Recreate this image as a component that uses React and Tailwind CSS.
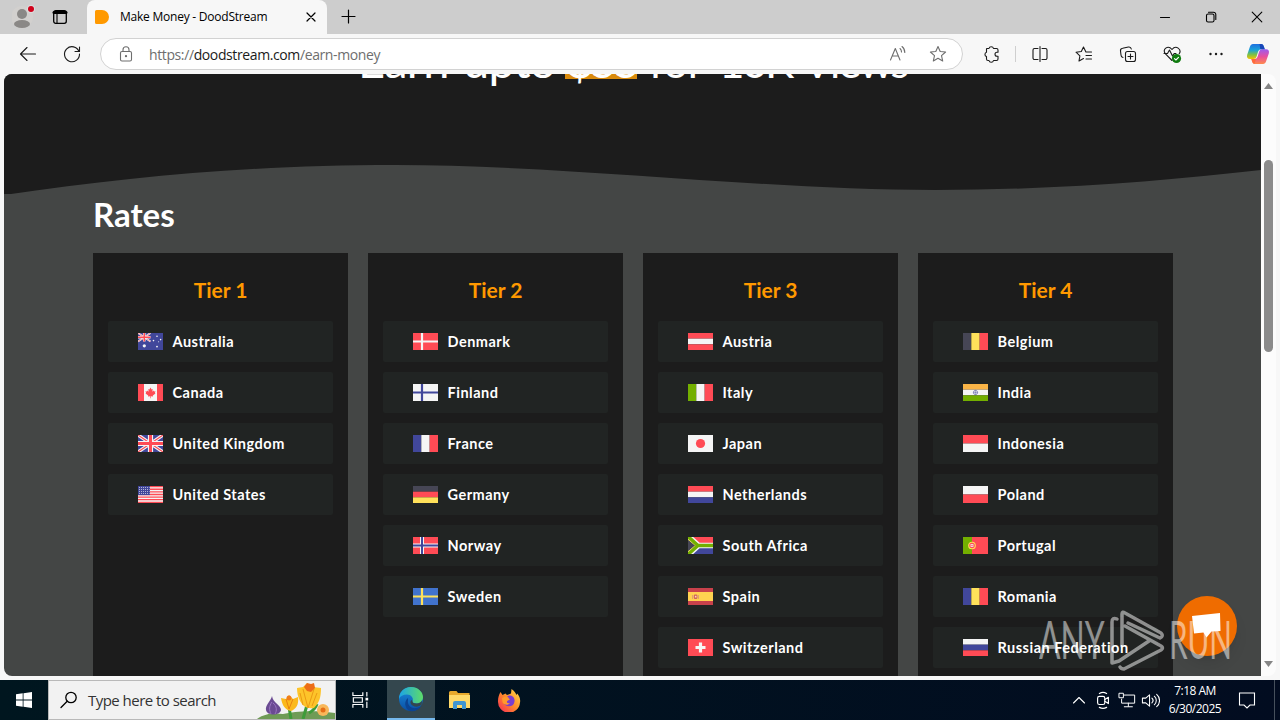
import { clsx } from "clsx";

const RED = "#ff4b55";
const BLUE = "#41479b";
const WHITE = "#f5f5f5";
const GREEN = "#73af00";
const YELLOW = "#ffe15a";
const BLACK = "#464655";

const HStripes = ({ colors }) =>
  colors.map((c, i) => (
    <rect key={i} y={(17 / colors.length) * i} width="25" height={17 / colors.length} fill={c} />
  ));

const VStripes = ({ colors }) =>
  colors.map((c, i) => (
    <rect key={i} x={(25 / colors.length) * i} width={25 / colors.length} height="17" fill={c} />
  ));

const Nordic = ({ bg, cross, inner }) => (
  <>
    <rect width="25" height="17" fill={bg} />
    <path d="M9 0v17M0 8.5h25" stroke={cross} strokeWidth={inner ? 4 : 2.2} />
    {inner && <path d="M9 0v17M0 8.5h25" stroke={inner} strokeWidth="2" />}
  </>
);

const UnionJack = () => (
  <>
    <rect width="25" height="17" fill={BLUE} />
    <path d="M0 0l25 17M25 0L0 17" stroke={WHITE} strokeWidth="3.4" />
    <path d="M0 0l25 17M25 0L0 17" stroke={RED} strokeWidth="1.1" />
    <path d="M12.5 0v17M0 8.5h25" stroke={WHITE} strokeWidth="5.2" />
    <path d="M12.5 0v17M0 8.5h25" stroke={RED} strokeWidth="3" />
  </>
);

const flags = {
  Australia: (
    <>
      <rect width="25" height="17" fill={BLUE} />
      <g transform="scale(.5)">
        <UnionJack />
      </g>
      <g fill={WHITE}>
        <circle cx="6.3" cy="12.8" r="1.6" />
        <circle cx="19" cy="3.2" r=".8" />
        <circle cx="15.5" cy="7.6" r=".8" />
        <circle cx="22.6" cy="6.6" r=".8" />
        <circle cx="19" cy="13.6" r=".9" />
        <circle cx="20.6" cy="8.8" r=".5" />
      </g>
    </>
  ),
  Canada: (
    <>
      <rect width="25" height="17" fill={WHITE} />
      <path d="M0 0h6v17H0zM19 0h6v17h-6z" fill={RED} />
      <path
        d="M12.5 3.6l1.1 2 1.1-.5-.4 2.6 1.3-1.1.4.9 1.5-.2-.6 1.6.6.6-2.7 2.1.2.9-2.2-.2v2h-.6v-2l-2.2.2.2-.9-2.7-2.1.6-.6-.6-1.6 1.5.2.4-.9 1.3 1.1-.4-2.6 1.1.5z"
        fill={RED}
      />
    </>
  ),
  "United Kingdom": <UnionJack />,
  "United States": (
    <>
      <rect width="25" height="17" fill={WHITE} />
      <path
        d="M0 .65h25M0 3.27h25M0 5.88h25M0 8.5h25M0 11.1h25M0 13.7h25M0 16.35h25"
        stroke={RED}
        strokeWidth="1.3"
      />
      <rect width="12" height="9.1" fill={BLUE} />
      <path
        d="M1 1.5h10.5M1 3.5h10.5M1 5.5h10.5M1 7.5h10.5"
        stroke={WHITE}
        strokeWidth=".8"
        strokeDasharray=".8 1.2"
      />
    </>
  ),
  Denmark: <Nordic bg={RED} cross={WHITE} />,
  Finland: <Nordic bg={WHITE} cross={BLUE} />,
  France: <VStripes colors={[BLUE, WHITE, RED]} />,
  Germany: <HStripes colors={[BLACK, RED, YELLOW]} />,
  Norway: <Nordic bg={RED} cross={WHITE} inner={BLUE} />,
  Sweden: <Nordic bg="#4173cd" cross={YELLOW} />,
  Austria: <HStripes colors={[RED, WHITE, RED]} />,
  Italy: <VStripes colors={[GREEN, WHITE, RED]} />,
  Japan: (
    <>
      <rect width="25" height="17" fill={WHITE} />
      <circle cx="12.5" cy="8.5" r="4.6" fill={RED} />
    </>
  ),
  Netherlands: <HStripes colors={[RED, WHITE, BLUE]} />,
  "South Africa": (
    <>
      <rect width="25" height="8.5" fill={RED} />
      <rect y="8.5" width="25" height="8.5" fill={BLUE} />
      <path d="M0-1l10.5 9.5H25M0 18l10.5-9.5" fill="none" stroke={WHITE} strokeWidth="5.6" />
      <path d="M-1 1.5l8.5 7-8.5 7z" fill={BLACK} stroke={YELLOW} strokeWidth="1" />
      <path d="M0-.5l10 9H25M0 17.5l10-9" fill="none" stroke={GREEN} strokeWidth="3.4" />
    </>
  ),
  Spain: (
    <>
      <rect width="25" height="17" fill="#c8414b" />
      <rect y="4" width="25" height="9" fill="#ffd250" />
      <path d="M4.5 7v4M10.5 7v4" stroke="#e0a070" strokeWidth="1" />
      <rect x="5.8" y="6.5" width="3.6" height="4.5" rx="1.2" fill="#d0605c" />
      <rect x="6.9" y="7.8" width="1.6" height="1.7" fill="#ffd9b0" />
    </>
  ),
  Switzerland: (
    <>
      <rect width="25" height="17" fill={RED} />
      <path d="M12.5 3.5v10M7.5 8.5h10" stroke={WHITE} strokeWidth="3.2" />
    </>
  ),
  Belgium: <VStripes colors={[BLACK, YELLOW, RED]} />,
  India: (
    <>
      <HStripes colors={["#fab446", WHITE, GREEN]} />
      <circle cx="12.5" cy="8.5" r="2.1" fill="none" stroke={BLUE} strokeWidth=".6" />
      <path d="M12.5 6.4v4.2M10.4 8.5h4.2" stroke={BLUE} strokeWidth=".4" />
    </>
  ),
  Indonesia: <HStripes colors={[RED, WHITE]} />,
  Poland: <HStripes colors={[WHITE, RED]} />,
  Portugal: (
    <>
      <rect width="25" height="17" fill={RED} />
      <rect width="9" height="17" fill={GREEN} />
      <circle cx="9" cy="8.5" r="3.3" fill={RED} stroke={YELLOW} strokeWidth="1.1" />
      <rect x="7.6" y="7" width="2.8" height="3" rx=".6" fill={WHITE} />
      <rect x="8.4" y="7.7" width="1.2" height="1.6" fill={RED} />
    </>
  ),
  Romania: <VStripes colors={[BLUE, YELLOW, RED]} />,
  "Russian Federation": <HStripes colors={[WHITE, BLUE, RED]} />,
};

const tiers = [
  { name: "Tier 1", countries: ["Australia", "Canada", "United Kingdom", "United States"] },
  { name: "Tier 2", countries: ["Denmark", "Finland", "France", "Germany", "Norway", "Sweden"] },
  {
    name: "Tier 3",
    countries: ["Austria", "Italy", "Japan", "Netherlands", "South Africa", "Spain", "Switzerland"],
  },
  {
    name: "Tier 4",
    countries: ["Belgium", "India", "Indonesia", "Poland", "Portugal", "Romania", "Russian Federation"],
  },
];

const Icon = ({ className, size = 20, children, ...props }) => (
  <svg
    width={size}
    height={size}
    viewBox="0 0 20 20"
    fill="none"
    stroke="currentColor"
    strokeWidth="1.1"
    strokeLinecap="round"
    strokeLinejoin="round"
    className={clsx("shrink-0", className)}
    {...props}
  >
    {children}
  </svg>
);

const TabStrip = () => (
  <div className="flex h-[34px] shrink-0 bg-[#cdcdcd] text-black">
    <div className="flex w-[87px] items-center rounded-br-lg pl-3">
      <svg width="24" height="26" viewBox="0 0 24 26" className="shrink-0">
        <circle cx="10" cy="13" r="11" fill="#d2d0ce" />
        <circle cx="10" cy="10" r="5" fill="#8a8886" />
        <ellipse cx="10" cy="20" rx="8" ry="4" fill="#8a8886" />
        <circle cx="19" cy="5" r="4" fill="#dcdcdc" />
        <circle cx="19" cy="5" r="3" fill="#d0021b" />
      </svg>
      <Icon className="ml-[14px]">
        <rect x="3.7" y="3.7" width="12.6" height="12.6" rx="2" strokeWidth="1.3" />
        <path d="M4 5.5h12" strokeWidth="3" />
        <path d="M7 7v9" />
      </Icon>
    </div>
    <div className="flex w-[240px] items-center rounded-t-lg bg-[#f7f7f7] pl-2">
      <svg width="14" height="14" viewBox="0 0 14 14">
        <path d="M0 1.5A1.5 1.5 0 0 1 1.5 0H7a7 7 0 0 1 0 14H1.5A1.5 1.5 0 0 1 0 12.5z" fill="#ff9900" />
      </svg>
      <span className="ml-[11px] w-[180px] whitespace-nowrap text-xs tracking-[-0.23px]">
        Make Money - DoodStream
      </span>
      <Icon size={20} className="ml-[1px]">
        <path d="M6 6l8 8M14 6l-8 8" strokeWidth="1.2" />
      </Icon>
    </div>
    <Icon className="mt-[6px] ml-[11px]">
      <path d="M10.500 4v13M4 10.500h13" strokeWidth="1.200" />
    </Icon>
    <div className="mr-[13px] ml-auto flex items-center gap-[26px]">
      <Icon>
        <path d="M5.5 10.5h9" />
      </Icon>
      <Icon>
        <rect x="5.5" y="7" width="7.5" height="8" rx="1.6" />
        <path d="M7.5 5.2h5a2.3 2.3 0 0 1 2.3 2.3v5" />
      </Icon>
      <Icon>
        <path d="M5.2 5.2l9.6 9.6M14.8 5.2l-9.6 9.6" />
      </Icon>
    </div>
  </div>
);

const CopilotLogo = () => (
  <svg width="24" height="22" viewBox="0 0 24 22" className="shrink-0">
    <defs>
      <linearGradient id="cpLeft" x1="0" y1="0" x2="0" y2="1">
        <stop offset="0" stopColor="#1f6fe0" />
        <stop offset=".4" stopColor="#19a3d8" />
        <stop offset=".7" stopColor="#7ac04a" />
        <stop offset="1" stopColor="#f5c400" />
      </linearGradient>
      <linearGradient id="cpRight" x1="0" y1="0" x2="0" y2="1">
        <stop offset="0" stopColor="#9b5cf0" />
        <stop offset=".5" stopColor="#e8509e" />
        <stop offset="1" stopColor="#ff8a4c" />
      </linearGradient>
    </defs>
    <path d="M7 1h8c1.8 0 2.4 1 3 3l.8 2.2h-3.5c-2 0-2.8 1-3.4 3l-1.3 4.3c-.5 1.7-1.5 2.5-3.2 2.5H4c-2.6 0-3.5-1.8-2.8-4.3L4 3.5C4.500 2 5.500 1 7 1z" fill="url(#cpLeft)" />
    <path d="M17 21H9c-1.800 0-2.400-1-3-3l-.6-2h3c2 0 2.800-1 3.400-3l1.300-4.300c.5-1.700 1.500-2.500 3.200-2.500H20c2.600 0 3.500 1.800 2.800 4.300L20 18.500c-.5 1.500-1.500 2.500-3 2.500z" fill="url(#cpRight)" />
    <path d="M13.500 1H15c1.800 0 2.400 1 3 3l.8 2.200h-4.500z" fill="#1847b8" />
    <path d="M5.400 16H10l-1.600 4.900C7 20.700 6.500 19.600 6 18z" fill="#ff6a3c" />
  </svg>
);

const Toolbar = () => (
  <div className="flex h-10 shrink-0 items-center bg-[#f7f7f7] text-[#1b1b1b]">
    <Icon className="ml-[18px]">
      <path d="M17.500 10H2.500M9 3.500L2.500 10 9 16.500" />
    </Icon>
    <Icon className="ml-6">
      <path d="M17 7.500A7.500 7.500 0 1 0 17.500 10M17.500 3v4.500H13" />
    </Icon>
    <div className="ml-[18px] flex h-8 w-[863px] items-center rounded-full border border-[#d2d2d2] bg-white text-[#6e6e6e]">
      <Icon className="ml-[15px]" size={20}>
        <rect x="4.500" y="7.500" width="11" height="9.500" rx="1.500" />
        <path d="M7 7.500V5.800a3 3 0 0 1 6 0v1.700" />
        <circle cx="10" cy="12.200" r=".6" fill="currentColor" />
      </Icon>
      <span className="ml-[13px] text-[14px] tracking-[-0.39px]">
        https://<span className="text-[#1b1b1b]">doodstream.com</span>/earn-money
      </span>
      <Icon className="ml-auto">
        <path d="M2.500 16L7.300 4.500 12 16M4.200 12h6.200M12 4.500c1 .8 1.500 2 1.500 3.500M14 2.500c2 1.500 2.800 3.500 2.800 6" />
      </Icon>
      <Icon className="mr-[14px] ml-5">
        <path d="M10 2.500l2.200 5 5.400.5-4.100 3.600 1.200 5.400-4.700-2.800L5.300 17l1.200-5.400L2.400 8l5.400-.5z" />
      </Icon>
    </div>
    <Icon className="ml-[19px]">
      <path d="M5 4.500h2a2.300 2.300 0 0 1 4.500 0h3a1.500 1.500 0 0 1 1.500 1.500v2.300h-1a2 2 0 0 0 0 4h1V15a1.500 1.500 0 0 1-1.500 1.500h-3a2.300 2.300 0 0 1-4.500 0H6A1.500 1.500 0 0 1 4.500 15v-2.500a2.200 2.200 0 0 1 0-4.200V5z" />
    </Icon>
    <div className="ml-[13px] h-4 w-px bg-[#cfcfcf]" />
    <div className="ml-[14px] flex items-center gap-6">
      <Icon>
        <path d="M10 2.500v15M8 4.500H4.500A1.500 1.500 0 0 0 3 6v8a1.500 1.500 0 0 0 1.500 1.500H8M12 4.500h3.500A1.500 1.500 0 0 1 17 6v8a1.500 1.500 0 0 1-1.500 1.500H12" />
      </Icon>
      <Icon>
        <path d="M17.500 8h-5.600L9.500 3 7.300 7.500 2 8.200l3.900 3.700L5 17l4.500-2.400M12 11.500h5.500M12 15h5.500" />
      </Icon>
      <Icon>
        <rect x="7.500" y="7.500" width="10" height="10" rx="2" />
        <path d="M12.500 10v5M10 12.500h5M5 13.500A2.500 2.500 0 0 1 3 11L2.500 7A2.500 2.500 0 0 1 4.600 4.200l5.800-1.200A2.500 2.500 0 0 1 13.300 5" />
      </Icon>
      <Icon>
        <path d="M10 16.500l-6.500-6.600C-.5 5.500 6 .5 10 5.500c4-5 10 0 7.200 4.300M2 9.500h3.500l2-3.500 3 6 1.700-2.500H14" />
        <circle cx="14.500" cy="14.500" r="4.600" fill="#107c10" stroke="none" />
        <path d="M12.500 14.600l1.400 1.400 2.600-2.700" stroke="white" />
      </Icon>
      <Icon>
        <g fill="currentColor" stroke="none">
          <circle cx="4.500" cy="10" r="1.200" />
          <circle cx="10" cy="10" r="1.200" />
          <circle cx="15.500" cy="10" r="1.200" />
        </g>
      </Icon>
    </div>
    <div className="ml-5">
      <CopilotLogo />
    </div>
  </div>
);

const CountryRow = ({ name }) => (
  <li className="flex h-[41px] items-center gap-[9.5px] rounded-[2px] bg-[#212423] pl-[30px]">
    <svg width="25" height="17" viewBox="0 0 25 17" className="shrink-0">
      {flags[name]}
    </svg>
    <span className="text-[14.5px] font-bold tracking-[0.5px] whitespace-nowrap text-white">{name}</span>
  </li>
);

const TierCard = ({ tier }) => (
  <div className="w-[255px] bg-[#1c1c1c] px-[15px] pt-[22px]">
    <h3 className="text-center text-[21px] leading-[30px] font-bold text-[#ff9900]">{tier.name}</h3>
    <ul className="mt-4 flex w-[225px] flex-col gap-[10px]">
      {tier.countries.map((c) => (
        <CountryRow key={c} name={c} />
      ))}
    </ul>
  </div>
);

const Hero = () => (
  <section className="relative h-[120px] shrink-0 bg-[#1c1c1c]">
    <div className="flex h-[18px] items-end pl-[354px]">
      <h1 className="isolate flex h-[63px] items-baseline text-[47px] leading-[63px] whitespace-nowrap text-white">
        <span className="w-[105px] tracking-[-0.7px]">Earn </span>
        <span className="w-[104px] tracking-[-0.8px]">upto </span>
        <span className="relative w-[82px] tracking-[-4px]">
          $55{" "}
          <span className="absolute bottom-[13px] -left-[2px] -z-10 h-[5px] w-[72px] bg-[#d98a0c]" />
        </span>
        <span className="w-[70px] text-[44px] tracking-[-0.5px]">for </span>
        <span className="w-[84px] text-[44px] tracking-[-2.5px]">10K </span>
        <span className="w-[106px] text-[43px] tracking-[-2px]">Views</span>
      </h1>
    </div>
    <svg className="absolute top-0 left-0" width="1257" height="121" viewBox="0 0 1257 121">
      <path d="M0 121C130 102 250 91 391 91 560 91 760 116 931 116c119 0 229-9 326-20v25z" fill="#444645" />
    </svg>
  </section>
);

const ChatButton = () => (
  <div className="absolute top-[522px] left-[1173px] flex size-[60px] items-center justify-center rounded-full bg-[#ef6c00] shadow-lg">
    <svg width="30" height="30" viewBox="0 0 30 30">
      <path d="M0 5l28-3 .5 18-9 .5-5 6-3-5-9.500 1z" fill="white" />
    </svg>
  </div>
);

const Watermark = () => (
  <div className="absolute top-[529px] left-[1031px] flex h-[72px] w-[205px] items-center text-white opacity-50">
    <span className="w-[75px] pl-1">
      <span className="inline-block origin-left scale-x-[0.61] text-[52px] leading-[72px]">ANY</span>
    </span>
    <svg width="56" height="64" viewBox="0 0 56 64" fill="none" stroke="white" strokeWidth="3.500" strokeLinejoin="round" strokeLinecap="round" className="relative top-[2px] -left-[1px]">
      <path d="M8 10q-5-2-5 3v41l7-2 30-20M13 37V5q0-3 3-1l36 20q3 3-1 5L19 14M16 17l36 20q3 2 0 4L15 60q-3 0-4-2" />
    </svg>
    <span className="w-[60px] pl-[3px]">
      <span className="inline-block origin-left scale-x-[0.57] text-[52px] leading-[72px]">RUN</span>
    </span>
  </div>
);

const Page = () => (
  <div className="flex h-[606px] shrink-0 bg-[#f7f7f7] px-1 pb-1">
    <div className="relative flex flex-1 flex-col overflow-hidden rounded-l-lg bg-[#444645] font-['Lato',sans-serif]">
      <Hero />
      <h2 className="ml-[89px] text-[33px] leading-[40px] font-bold text-white">Rates</h2>
      <div className="mt-[19px] ml-[89px] flex h-[450px] shrink-0 gap-5">
        {tiers.map((t) => (
          <TierCard key={t.name} tier={t} />
        ))}
      </div>
      <ChatButton />
      <Watermark />
    </div>
    <div className="flex w-[15px] flex-col items-center rounded-r-lg bg-[#fcfcfc] pt-[9px] pb-[9px]">
      <svg width="9" height="6" viewBox="0 0 9 6">
        <path d="M4.500 0L9 6H0z" fill="#858585" />
      </svg>
      <div className="mt-[71px] h-[192px] w-[9px] rounded-full bg-[#8b8b8b]" />
      <svg width="9" height="6" viewBox="0 0 9 6" className="mt-auto">
        <path d="M4.500 6L9 0H0z" fill="#858585" />
      </svg>
    </div>
  </div>
);

const Flowers = () => (
  <svg width="80" height="38" viewBox="0 0 80 38">
    <path d="M2 38c8-6 18-6 26-5 12-3 32-4 52-1v6z" fill="#6f9b56" />
    <path d="M34 26l2 12M52 24l-4 14M54 32c5-3 7-6 8-9" stroke="#3e9b3a" strokeWidth="3" fill="none" />
    <path d="M17 15c-1 5-7 9-6 14 1 6 14 6 15 0 0-5-8-7-9-14z" fill="#6b4b93" />
    <path d="M17 21c-3 4-3 8-1 12M18 22c4 3 4 8 2 11" stroke="#9a76c0" fill="none" />
    <path d="M26 17l5 1 3-4 4 4 5-2c1 8-2 12-7 14-6-1-9-6-10-13z" fill="#fbb91c" />
    <path d="M31 18l3 10 4-10" stroke="#e88212" fill="none" />
    <circle cx="34" cy="17" r="2.500" fill="#ef7d1a" />
    <path d="M42 7l6-1 4-4 6 4 8 1c0 10-2 15-7 20-8 1-11-2-14-7-2-4-3-8-3-13z" fill="#fdc42a" />
    <path d="M48 8l5 19 6-19M45 12l3 12M62 12l-5 13" stroke="#eb9a14" fill="none" />
    <path d="M49 6l3-4 4 1 3-1 1 5-4 4-4-1z" fill="#ec6d18" />
    <circle cx="68" cy="29" r="6" fill="#f8b75a" />
    <circle cx="68" cy="29" r="2.500" fill="#e56e16" />
  </svg>
);

const EdgeLogo = () => (
  <svg width="26" height="26" viewBox="0 0 26 26">
    <defs>
      <linearGradient id="edgeTop" x1="0" x2="1">
        <stop offset="0" stopColor="#1ba4e8" />
        <stop offset="1" stopColor="#5edc68" />
      </linearGradient>
      <linearGradient id="edgeLow" x1="0" y1="0" x2="0" y2="1">
        <stop offset="0" stopColor="#1b8fe0" />
        <stop offset="1" stopColor="#0a4fa3" />
      </linearGradient>
    </defs>
    <circle cx="13" cy="13" r="12" fill="url(#edgeLow)" />
    <path d="M1 13C1 6 6 1 13 1s12 5 12 10c0 4-3 6.500-6.500 6.500-3 0-4.500-1-4-2.500C16 12 13 8.500 9 8.500S2 10 1 13z" fill="url(#edgeTop)" />
    <path d="M10 14c-1 5 3 9 8 8 2 0 4-1 5.500-2.500C21 24 16 26 12 25 6 22 6 15 10 12z" fill="#0c4492" />
    <path d="M14.500 15c-.5 1.500 1 2.500 4 2.500 2.500 0 4.500-1 5.500-3l-.3 4c-3 3-9 3-11-1-.8-1.500 0-3 1.300-3.500z" fill="#34474e" />
  </svg>
);

const FolderLogo = () => (
  <svg width="22" height="20" viewBox="0 0 22 20">
    <path d="M0 2.500A1.500 1.500 0 0 1 1.500 1h6L9 3h11.500v5H0z" fill="#e8a92c" />
    <path d="M0 5h21v13H0z" fill="#ffd969" />
    <path d="M4 19v-6a2 2 0 0 1 2-2h9a2 2 0 0 1 2 2v6h-4v-4H8v4z" fill="#3f95d2" />
  </svg>
);

const FirefoxLogo = () => (
  <svg width="24" height="24" viewBox="0 0 24 24">
    <defs>
      <linearGradient id="ffBody" x1="1" y1="0" x2="0" y2="1">
        <stop offset="0" stopColor="#ffe14a" />
        <stop offset=".5" stopColor="#ff8a2a" />
        <stop offset="1" stopColor="#f5225a" />
      </linearGradient>
    </defs>
    <path d="M3.500 4l2 3 3-1.500L10 7l4-1.500L14.500 1c3 2 4 4 5 6l.8-1.500C23 9 23.500 12 23 14.500A11 11 0 0 1 1 13c0-3.500 1-6.500 2.500-9z" fill="url(#ffBody)" />
    <path d="M12 7.500c4 0 6 2.500 5.500 6s-3 5-6 4.800c-3-.2-5-2.300-5-5.300l5-1c1-2-.5-3-1.500-3.500z" fill="#7a3ed0" />
    <path d="M5 10c2-1.500 4-1.500 6 .5 1 0 2 .3 2 .8-1 1.200-2.500 1-3 2-.5 1.400 1 2.500 3 1.700-2 3-6.500 2-7.500-1z" fill="#ff9a2c" />
  </svg>
);

const Taskbar = () => (
  <div className="flex h-10 shrink-0 items-center bg-gradient-to-r from-[#00161f] to-[#020c20] text-white">
    <div className="flex h-10 w-12 items-center justify-center">
      <svg width="16" height="16" viewBox="0 0 16 16" fill="white">
        <path d="M0 2.200L6.700 1.300v6.300H0zM7.500 1.200L16 0v7.600H7.500zM0 8.400h6.700v6.300L0 13.800zM7.500 8.400H16V16l-8.500-1.200z" />
      </svg>
    </div>
    <div className="flex h-10 w-[288px] items-center border border-[#b9b9b9] bg-[#f2f2f2] pl-[10px] text-[#333]">
      <Icon size={20} className="text-black">
        <circle cx="12" cy="7.500" r="5.200" strokeWidth="1.300" />
        <path d="M8.200 11.300L2 17.500" strokeWidth="1.300" />
      </Icon>
      <span className="ml-[9px] text-[15px] tracking-[-0.53px] whitespace-nowrap">Type here to search</span>
      <div className="ml-auto">
        <Flowers />
      </div>
    </div>
    <div className="flex w-[49px] justify-center">
      <Icon size={18} strokeWidth="1.300" strokeLinecap="butt" strokeLinejoin="miter">
        <path d="M1 1.500v3.500h11V1.500M1 18.500V15h11v3.500M1.500 7.500h10v5h-10zM16.500 1v5M16.500 12v7" />
        <path d="M15 7.500h3v3h-3z" fill="white" stroke="none" />
      </Icon>
    </div>
    <div className="ml-[2px] flex h-10 w-12 items-center justify-center border-b-2 border-[#76b9ed] bg-[#34474e]">
      <EdgeLogo />
    </div>
    <div className="flex w-[49px] justify-center">
      <FolderLogo />
    </div>
    <div className="flex w-[49px] justify-center">
      <FirefoxLogo />
    </div>
    <div className="ml-auto flex items-center">
      <Icon size={20}>
        <path d="M4.500 13L10 7.500l5.500 5.500" />
      </Icon>
      <Icon size={18} className="ml-[5px]" strokeWidth="1.300">
        <rect x="4" y="6" width="8" height="9" rx="2" />
        <path d="M12 9.500l4-2.500v7l-4-2.500M6 2.800c2.500-1.500 5.500-1.500 8 0M6 18.200c2.500 1.300 5.500 1.300 8 0" />
      </Icon>
      <Icon size={18} className="ml-[6px]" strokeLinejoin="miter">
        <path d="M7 4.500h11.500v9H4V9M1.500 2.500h4.500v5H1.500zM11.500 13.500V17M7 17.500h9" />
      </Icon>
      <Icon size={19} className="ml-[5px]">
        <path d="M1.500 7.500H5L9 4v12l-4-3.500H1.500zM11.500 7.500c1.500 1.500 1.500 3.500 0 5M14 5.500c2.800 2.500 2.800 6.500 0 9M16.500 3.500c4 3.500 4 9.500 0 13" />
      </Icon>
      <div className="ml-[7px] flex w-[56px] flex-col items-center text-[12px] leading-[18px] tracking-[-0.5px] whitespace-nowrap">
        <span>7:18 AM</span>
        <span>6/30/2025</span>
      </div>
      <Icon size={20} className="ml-[14px]" strokeLinejoin="miter">
        <path d="M2.500 3h15v12H13l-3 3-3-3H2.500z" />
      </Icon>
      <div className="ml-[17px] h-10 w-px bg-[#46505c]" />
      <div className="w-[5px]" />
    </div>
  </div>
);

export default function App() {
  return (
    <div className="flex h-[720px] w-[1280px] flex-col overflow-hidden font-['Open_Sans','Noto_Sans',sans-serif]">
      <TabStrip />
      <Toolbar />
      <Page />
      <Taskbar />
    </div>
  );
}
